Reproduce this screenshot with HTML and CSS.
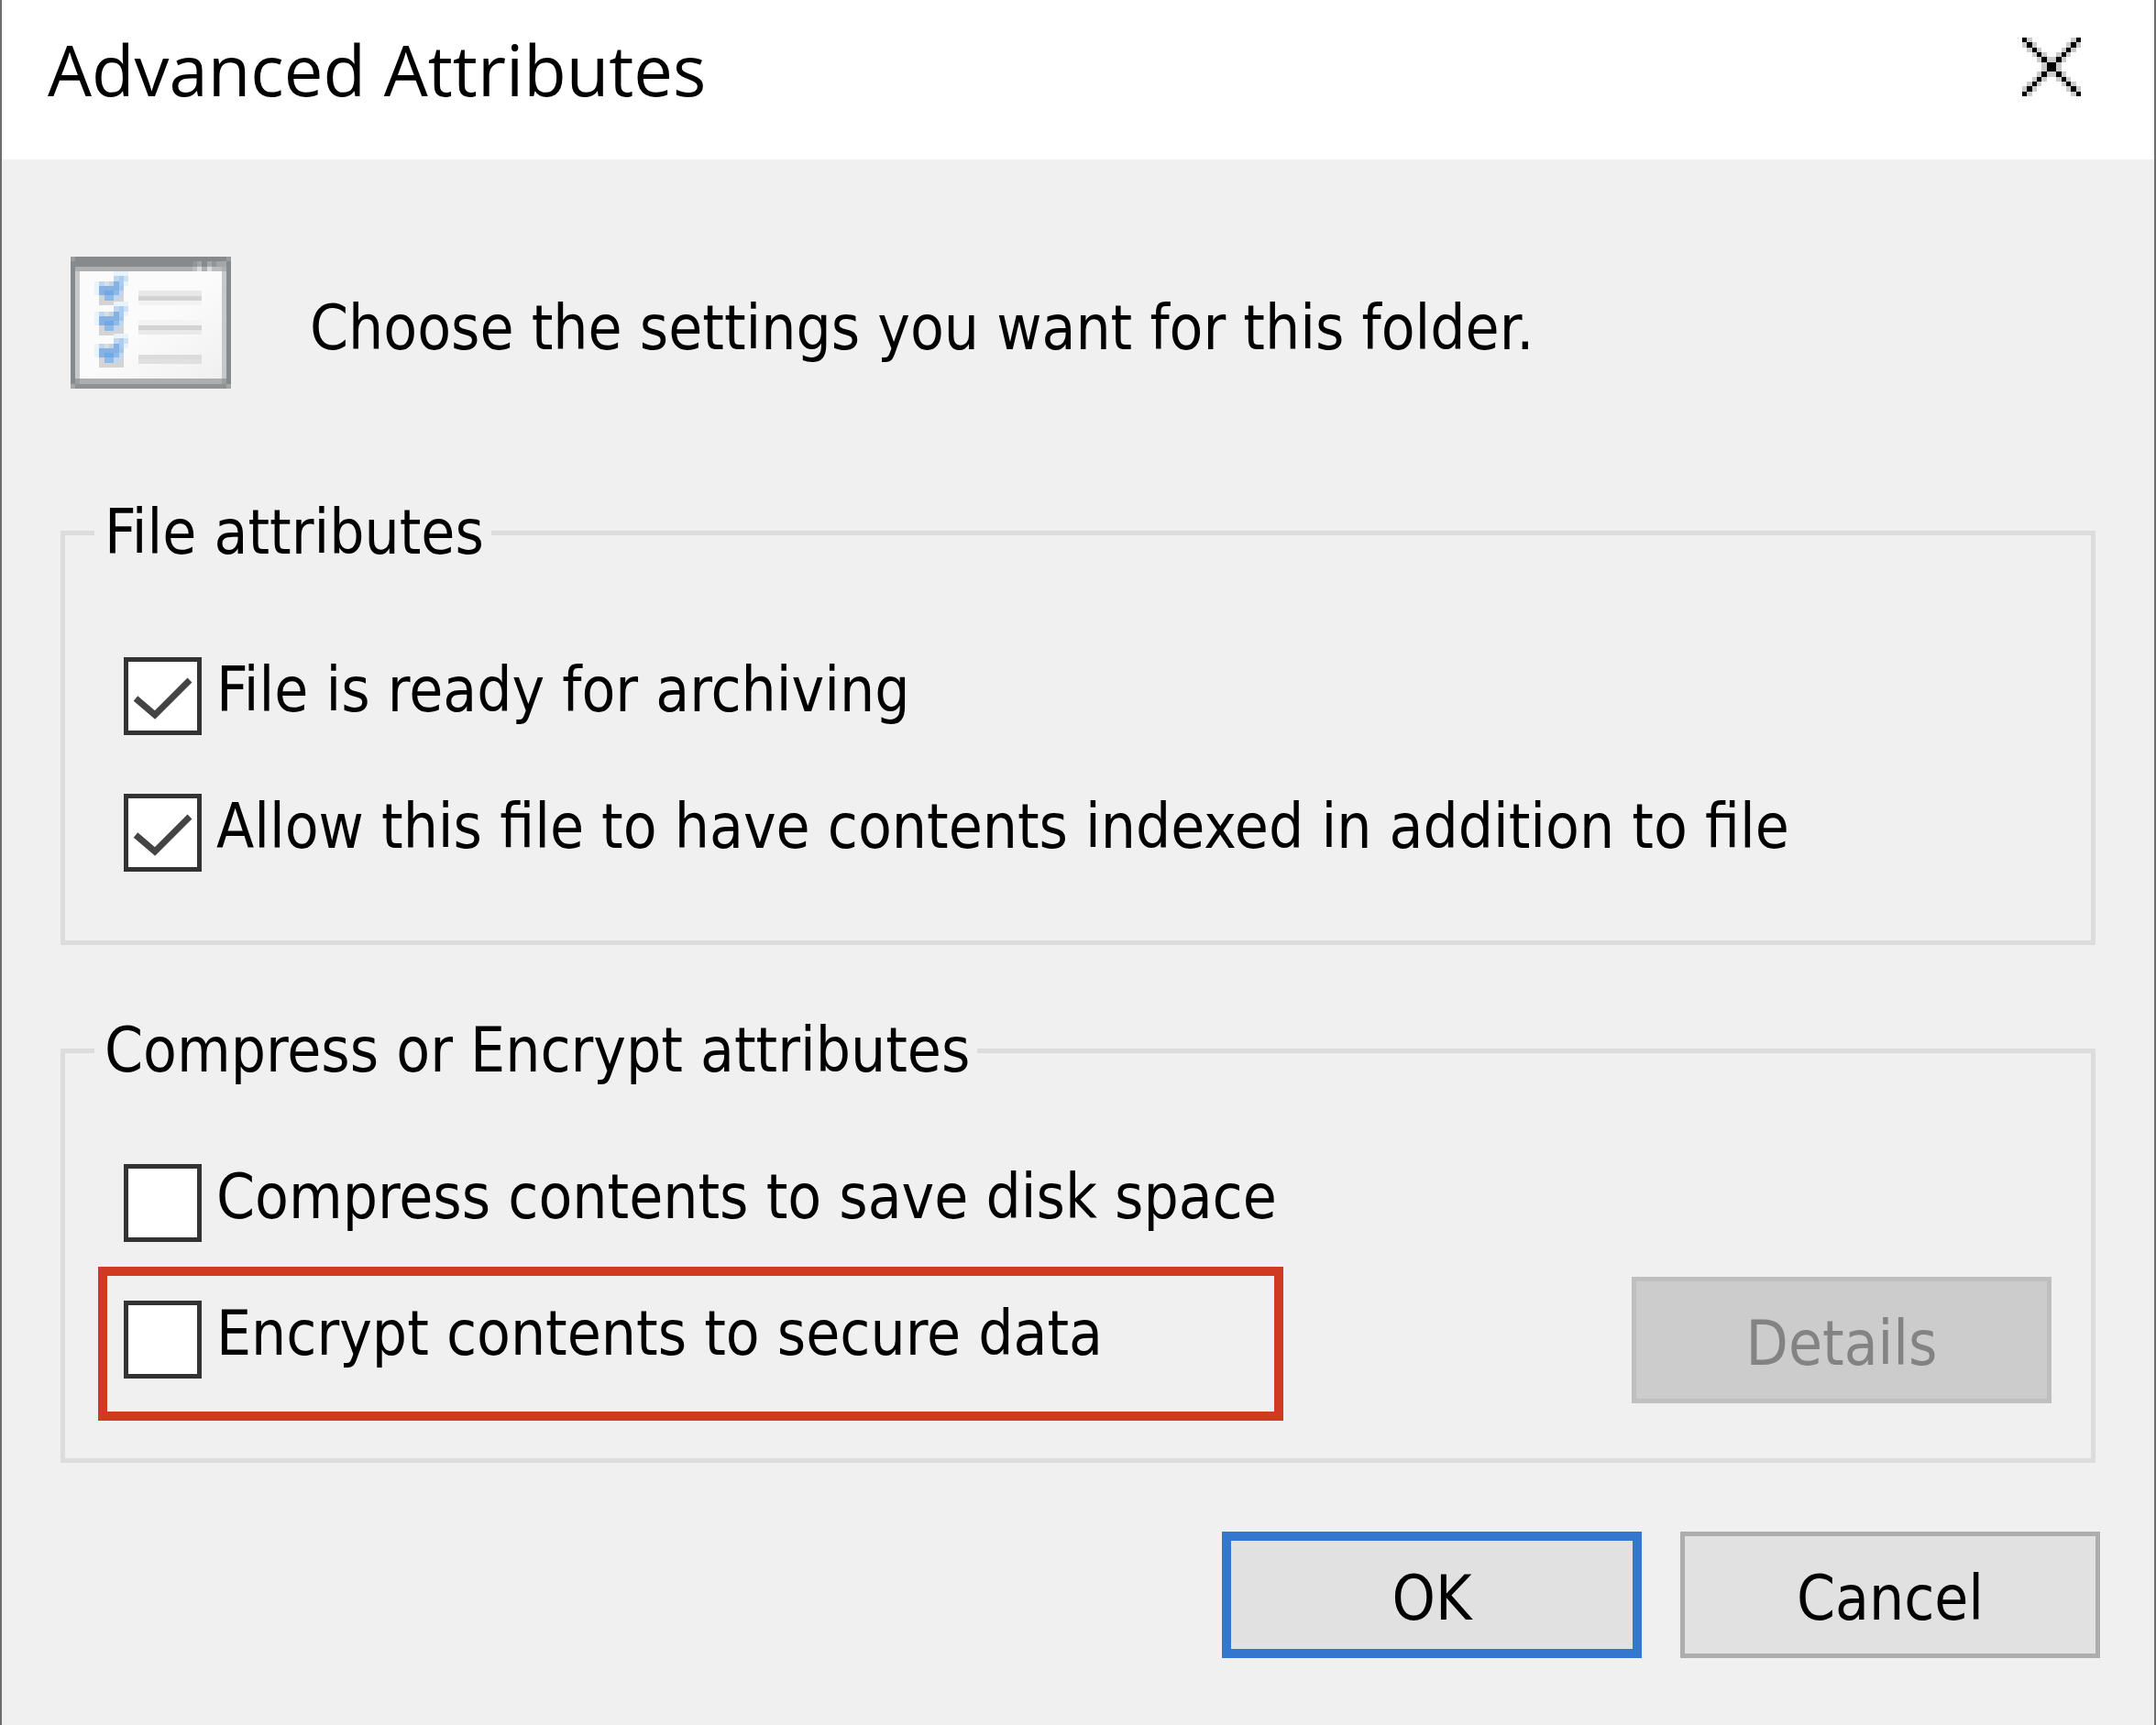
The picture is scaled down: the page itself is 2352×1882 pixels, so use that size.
FILE: index.html
```html
<!DOCTYPE html>
<html lang="en">
<head>
    <meta charset="UTF-8">
    <meta name="viewport" content="width=device-width, initial-scale=1.0">
    <title>Advanced Attributes</title>
    <link rel="stylesheet" href="styles.css">
</head>
<body>
    <div class="dialog">
        <header class="titlebar">
            <h1>Advanced Attributes</h1>
            <button type="button" class="close" aria-label="Close">
                <svg viewBox="0 0 12 12" shape-rendering="crispEdges">
                    <g fill="#cccccc">
                        <path d="M1 0h1v1h1v1h1v1h1v1h2v-1h1v-1h1v-1h1v-1h1v1h1v1h-1v1h-1v1h-1v1h-1v2h1v1h1v1h1v1h1v1h-1v1h-1v-1h-1v-1h-1v-1h-1v-1h-2v1h-1v1h-1v1h-1v1h-1v-1h-1v-1h1v-1h1v-1h1v-1h1v-2h-1v-1h-1v-1h-1v-1h-1v-1h1z"/>
                    </g>
                    <path fill="#000000" d="M0 0h1v1h1v1h1v1h1v1h1v1h2v-1h1v-1h1v-1h1v-1h1v-1h1v1h-1v1h-1v1h-1v1h-1v1h-1v2h1v1h1v1h1v1h1v1h1v1h-1v-1h-1v-1h-1v-1h-1v-1h-1v-1h-2v1h-1v1h-1v1h-1v1h-1v1h-1v-1h1v-1h1v-1h1v-1h1v-1h1v-2h-1v-1h-1v-1h-1v-1h-1v-1h-1z"/>
                </svg>
            </button>
        </header>
        <form class="content">
            <div class="intro">
                <svg class="intro-icon" viewBox="0 0 525 432" shape-rendering="crispEdges">
                    <defs>
                        <linearGradient id="paper" x1="0" y1="0" x2="1" y2="1">
                            <stop offset="0.5" stop-color="#fbfbfb"/>
                            <stop offset="1" stop-color="#f0f0f0"/>
                        </linearGradient>
                        <!-- one list tick, reused on each line -->
                        <g id="tick">
                            <path fill="#eaf2fa" d="M48 -15h48v48h-15v15h-15v15h-81v-45h63z"/>
                            <path fill="#d4d4d4" d="M0 48h81v48h-81z"/>
                            <path fill="#c0d6ee" d="M0 18h18v15h-18zM48 0h18v18h-18zM66 48h15v15h-15zM48 63h18v17h-18z"/>
                            <path fill="#dcdde0" d="M18 18h15v15h-15z"/>
                            <path fill="#c3d3e6" d="M33 18h15v15h-15z"/>
                            <path fill="#cfe1f4" d="M81 0h15v18h-15z"/>
                            <path fill="#a9cdf2" d="M66 0h15v33h-15z"/>
                            <path fill="#85b2e2" d="M0 33h66v15h-66zM48 18h18v15h-18zM0 48h18v15h-18z"/>
                            <path fill="#71a9e4" d="M18 48h30v15h-30z"/>
                            <path fill="#8dbaea" d="M48 48h18v15h-18zM18 63h30v17h-30z"/>
                            <path fill="#a3c6ea" d="M66 33h15v15h-15z"/>
                        </g>
                    </defs>
                    <rect width="525" height="432" fill="#868a8c"/>
                    <path fill="#999b9c" d="M0 0h15v15h-15zM510 0h15v15h-15z"/>
                    <path fill="#a5a7a7" d="M0 417h15v15h-15zM510 417h15v15h-15z"/>
                    <rect x="15" y="417" width="495" height="15" fill="#8f9293"/>
                    <rect x="15" y="33" width="495" height="384" fill="#c6c8ca"/>
                    <rect x="15" y="33" width="495" height="15" fill="#adafb1"/>
                    <rect x="15" y="399" width="495" height="18" fill="#acaeaf"/>
                    <path fill="#9a9fa1" d="M15 399h15v18h-15zM495 399h15v18h-15z"/>
                    <rect x="30" y="48" width="465" height="351" fill="url(#paper)"/>
                    <!-- caption buttons -->
                    <path fill="#a3a5a7" d="M414 15h15v18h-15zM447 15h15v18h-15zM477 15h33v18h-33z"/>
                    <path fill="#929597" d="M399 15h15v18h-15zM462 15h15v18h-15z"/>
                    <path fill="#dcdcdd" d="M414 33h15v15h-15zM447 33h15v15h-15z"/>
                    <path fill="#bcbdbf" d="M399 33h15v15h-15zM462 33h33v15h-33z"/>
                    <use href="#tick" x="93" y="63"/>
                    <use href="#tick" x="93" y="162"/>
                    <use href="#tick" x="93" y="267"/>
                    <path fill="#e9e9e9" d="M222 111h207v18h-207zM222 240h207v15h-207z"/>
                    <path fill="#f3f3f3" d="M222 144h207v15h-207zM222 207h207v18h-207z"/>
                    <path fill="#d3d3d3" d="M222 129h207v15h-207zM222 225h207v15h-207z"/>
                    <path fill="#dcdcdc" d="M222 321h207v15h-207z"/>
                    <path fill="#e0e0e0" d="M222 336h207v15h-207z"/>
                </svg>
                <p>Choose the settings you want for this folder.</p>
            </div>

            <fieldset class="group file-group">
                <legend>File attributes</legend>
                <div class="option">
                    <input type="checkbox" id="archive" name="archive" checked>
                    <label for="archive">File is ready for archiving</label>
                </div>
                <div class="option">
                    <input type="checkbox" id="index" name="index" checked>
                    <label for="index">Allow this file to have contents indexed in addition to file</label>
                </div>
            </fieldset>

            <fieldset class="group">
                <legend>Compress or Encrypt attributes</legend>
                <div class="option">
                    <input type="checkbox" id="compress" name="compress">
                    <label for="compress">Compress contents to save disk space</label>
                </div>
                <div class="encrypt-row">
                    <div class="option highlight">
                        <input type="checkbox" id="encrypt" name="encrypt">
                        <label for="encrypt">Encrypt contents to secure data</label>
                    </div>
                    <button type="button" class="btn" disabled>Details</button>
                </div>
            </fieldset>

            <div class="actions">
                <button type="submit" class="btn primary">OK</button>
                <button type="button" class="btn">Cancel</button>
            </div>
        </form>
    </div>
</body>
</html>
```
FILE: styles.css
```css
* {
    box-sizing: border-box;
}
body {
    margin: 0;
    background-color: #f0f0f0;
    color: #000;
    font-family: "DejaVu Sans Condensed", "DejaVu Sans", sans-serif;
    font-size: 67px;
    line-height: 72px;
}
.dialog {
    min-height: 100vh;
    border: solid #6d6d6d;
    border-width: 0 2px;
}
.titlebar {
    display: flex;
    justify-content: space-between;
    align-items: flex-start;
    height: 174px;
    padding: 20px 80px 0 50px;
    background-color: #fff;
}
h1 {
    margin: 0;
    font-family: "Open Sans", sans-serif;
    font-size: 76px;
    font-weight: normal;
    line-height: 112px;
}
.close {
    margin-top: 21px;
    padding: 0;
    border: none;
    background: none;
}
.close svg {
    display: block;
    width: 64px;
    height: 64px;
}
.content {
    padding: 106px 64px 72px;
}
.intro {
    display: flex;
    align-items: center;
    gap: 86px;
    margin: 0 0 117px 11px;
}
.intro-icon {
    width: 175px;
    height: 144px;
}
.intro p {
    margin: 0;
    padding-top: 12px;
}
.group {
    min-width: 0;
    margin: 0 0 75px;
    padding: 84px 43px 41px 36px;
    border: 5px solid #dcdcdc;
}
.file-group {
    padding-top: 96px;
    padding-bottom: 75px;
}
legend {
    margin-left: -4px;
    padding: 0 8px 0 11px;
    line-height: 80px;
}
.option {
    display: flex;
    align-items: flex-start;
    gap: 16px;
    padding-left: 28px;
}
.file-group .option + .option {
    margin-top: 64px;
}
input[type="checkbox"] {
    appearance: none;
    flex: none;
    width: 85px;
    height: 85px;
    margin: 0;
    border: 5px solid #333;
    background-color: #fff;
}
input[type="checkbox"]:checked {
    background-image: url("data:image/svg+xml,%3Csvg xmlns='http://www.w3.org/2000/svg' viewBox='0 0 75 75'%3E%3Cpath d='M8 40L29 58L67 20' fill='none' stroke='%23444' stroke-width='7'/%3E%3C/svg%3E");
}
.encrypt-row {
    display: flex;
    align-items: flex-start;
    gap: 380px;
    margin-top: 27px;
}
.highlight {
    flex: 1;
    padding: 27px 0 36px 18px;
    border: 10px solid #d03a22;
}
.btn {
    flex: none;
    width: 458px;
    height: 138px;
    padding: 8px 0 0;
    border: 5px solid #adadad;
    background-color: #e1e1e1;
    color: #000;
    font: inherit;
}
.btn:disabled {
    margin-top: 11px;
    border-color: #bfbfbf;
    background-color: #ccc;
    color: #838383;
}
.primary {
    border: 10px solid #3377d1;
}
.actions {
    display: flex;
    justify-content: flex-end;
    gap: 42px;
    margin-right: -5px;
}
```
